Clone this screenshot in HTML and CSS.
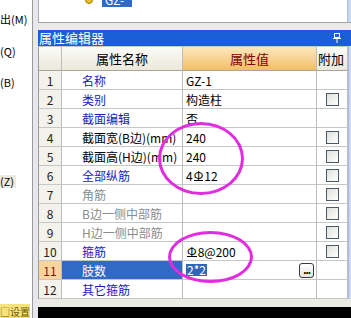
FILE: index.html
```html
<!DOCTYPE html>
<html lang="zh-CN">
<head>
    <meta charset="UTF-8">
    <meta name="viewport" content="width=device-width, initial-scale=1.0">
    <title>属性编辑器</title>
    <link rel="stylesheet" href="styles.css">
</head>
<body>
    <div class="menu">
        <div class="menu-item m1">出(M)</div>
        <div class="menu-item m2">(Q)</div>
        <div class="menu-item m3">(B)</div>
        <div class="menu-item m4 active">(Z)</div>
        <div class="menu-item m5"><span class="hint">□设置</span></div>
    </div>
    <div class="split"></div>
    <div class="dock">
        <div class="tree">
            <div class="tree-row">
                <span class="tree-icon"></span>
                <span class="tree-sel">GZ-1</span>
            </div>
            <div class="vscroll"></div>
        </div>
        <div class="gap"></div>
        <div class="title">
            <span>属性编辑器</span>
            <svg class="pin" width="8" height="10" viewBox="0 0 8 10">
                <rect x="1.5" y="0.5" width="5" height="4" fill="none" stroke="#fff"/>
                <line x1="0" y1="5.5" x2="8" y2="5.5" stroke="#fff"/>
                <line x1="4" y1="6" x2="4" y2="10" stroke="#fff"/>
            </svg>
        </div>
        <div class="grid-wrap">
            <div class="grid">
                <div class="hd num"></div>
                <div class="hd">属性名称</div>
                <div class="hd hd-val">属性值</div>
                <div class="hd hd-add">附加</div>

                <div class="num">1</div>
                <div class="name blue">名称</div>
                <div class="val">GZ-1</div>
                <div class="add"></div>

                <div class="num">2</div>
                <div class="name blue">类别</div>
                <div class="val">构造柱</div>
                <div class="add"><span class="chk"></span></div>

                <div class="num">3</div>
                <div class="name blue">截面编辑</div>
                <div class="val">否</div>
                <div class="add"></div>

                <div class="num">4</div>
                <div class="name">截面宽(B边)(mm)</div>
                <div class="val">240</div>
                <div class="add"><span class="chk"></span></div>

                <div class="num">5</div>
                <div class="name">截面高(H边)(mm)</div>
                <div class="val">240</div>
                <div class="add"><span class="chk"></span></div>

                <div class="num">6</div>
                <div class="name blue">全部纵筋</div>
                <div class="val">4<span class="bar">Φ</span>12</div>
                <div class="add"><span class="chk"></span></div>

                <div class="num">7</div>
                <div class="name gray">角筋</div>
                <div class="val"></div>
                <div class="add"><span class="chk"></span></div>

                <div class="num">8</div>
                <div class="name gray">B边一侧中部筋</div>
                <div class="val"></div>
                <div class="add"><span class="chk"></span></div>

                <div class="num">9</div>
                <div class="name gray">H边一侧中部筋</div>
                <div class="val"></div>
                <div class="add"><span class="chk"></span></div>

                <div class="num">10</div>
                <div class="name blue">箍筋</div>
                <div class="val"><span class="bar">Φ</span>8@200</div>
                <div class="add"><span class="chk"></span></div>

                <div class="num num-cur">11</div>
                <div class="name cur">肢数</div>
                <div class="val edit"><span class="seltext">2*2</span><span class="more">...</span></div>
                <div class="add"></div>

                <div class="num">12</div>
                <div class="name blue">其它箍筋</div>
                <div class="val"></div>
                <div class="add"></div>
            </div>
            <div class="vscroll"></div>
        </div>
        <div class="filler"></div>
        <div class="black"></div>
    </div>

    <div class="ring ring-a"></div>
    <div class="ring ring-b"></div>
</body>
</html>
```

FILE: styles.css
```css
body {
    margin: 0;
    width: 351px;
    height: 318px;
    overflow: hidden;
    display: flex;
    position: relative;
    font-family: "Noto Sans CJK SC", "Noto Sans", sans-serif;
    font-size: 12px;
    background-color: white;
}

/* left menu, cut off */
.menu {
    width: 32px;
    display: flex;
    flex-direction: column;
    padding-top: 11px;
    box-sizing: border-box;
    overflow: hidden;
    font-size: 11px;
}
.menu-item {
    height: 16px;
    line-height: 16px;
    white-space: nowrap;
    color: black;
}
.m2 { margin-top: 16px; }
.m3 { margin-top: 15px; }
.m4 { margin-top: 85px; }
.menu-item.active {
    width: 16px;
    height: 13px;
    line-height: 13px;
    background-color: #ecebe3;
}
.m5 {
    margin-top: auto;
    height: 12px;
    line-height: 12px;
    font-size: 10px;
}
.hint {
    background-color: #f6e27a;
    color: #6a5a10;
}

.split {
    width: 5px;
    border-left: 1px solid #9a9a9a;
    background-color: #e6e8ee;
}

.dock {
    flex: 1;
    display: flex;
    flex-direction: column;
    min-width: 0;
}

/* tree panel (only bottom edge visible) */
.tree {
    height: 22px;
    border-bottom: 1px solid #a3a3a3;
    border-left: 1px solid #b0b0b0;
    display: flex;
    overflow: hidden;
}
.tree-row {
    flex: 1;
    display: flex;
    align-items: center;
    height: 14px;
    margin-top: -7px;
    padding-left: 46px;
}
.tree-icon {
    width: 8px;
    height: 8px;
    border-radius: 50%;
    background-color: #e8c020;
    border: 1px solid #a08010;
    box-sizing: border-box;
}
.tree-sel {
    margin-left: 9px;
    padding: 0 3px;
    width: 24px;
    height: 14px;
    line-height: 14px;
    background-color: #316ac5;
    color: white;
}
.vscroll {
    width: 3px;
    background-color: #c9d7f1;
    border-left: 1px solid #aebde0;
}

.gap {
    height: 7px;
    background-color: #ecebe3;
}

.title {
    height: 16px;
    background-color: #1a5fd8;
    color: white;
    font-size: 13px;
    line-height: 16px;
    padding-left: 1px;
    display: flex;
    align-items: center;
    justify-content: space-between;
}
.pin {
    margin-right: 10px;
}

/* property grid */
.grid-wrap {
    display: flex;
}
.grid {
    display: grid;
    grid-template-columns: 23px 121px 134px 31px;
    grid-auto-rows: 19px;
    grid-template-rows: 24px;
    border-left: 1px solid #9c9c9c;
    border-top: 1px solid #c8c8c8;
}
.grid > div {
    box-sizing: border-box;
    border-right: 1px solid #bdbdbd;
    border-bottom: 1px solid #c6c6c6;
    display: flex;
    align-items: center;
    white-space: nowrap;
    overflow: hidden;
}
.hd {
    background: linear-gradient(#fbfbf8, #ebe8db);
    justify-content: center;
    font-size: 13px;
    color: black;
    border-bottom-color: #a9a699 !important;
}
.hd-val {
    background: linear-gradient(#fde8bd, #f2bd68);
    color: #800000;
}
.hd-add {
    justify-content: flex-start;
    padding-left: 1px;
}
.num {
    background-color: #f3f2ec;
    justify-content: center;
    color: #222;
}
.num-cur {
    background-color: #f9d59b;
    color: #8a1010;
}
.name {
    padding-left: 20px;
    color: black;
}
.blue { color: #1a1ac4; }
.gray { color: #8c8c8c; }
.cur {
    background-color: #316ac5;
    color: white;
}
.val {
    padding-left: 3px;
    color: black;
}
.bar {
    display: inline-block;
    line-height: 10px;
    border-bottom: 1px solid black;
    margin: 0 1px;
}
.edit {
    justify-content: space-between;
    padding-right: 2px;
}
.seltext {
    background-color: #3165b8;
    color: white;
    padding: 0 1px;
    line-height: 12px;
}
.more {
    width: 15px;
    height: 15px;
    box-sizing: border-box;
    border: 1px solid #3a3a3a;
    border-radius: 3px;
    background: linear-gradient(#ffffff, #e4e4e4);
    font-size: 10px;
    line-height: 8px;
    font-weight: bold;
    letter-spacing: -1px;
    display: flex;
    justify-content: center;
    align-items: center;
}

.add {
    justify-content: center;
}
.chk {
    width: 13px;
    height: 13px;
    box-sizing: border-box;
    border: 1px solid #4a5868;
    background: linear-gradient(135deg, #e0e0da, #ffffff);
}

.filler {
    height: 8px;
    background-color: #ecebe3;
}
.black {
    flex: 1;
    background-color: black;
}

/* hand-drawn annotation rings over the grid */
.ring {
    position: absolute;
    border: 3px solid #e02de0;
    border-radius: 50%;
    box-sizing: border-box;
}
.ring-a {
    left: 158px;
    top: 122px;
    width: 86px;
    height: 73px;
}
.ring-b {
    left: 168px;
    top: 231px;
    width: 85px;
    height: 52px;
}
```
